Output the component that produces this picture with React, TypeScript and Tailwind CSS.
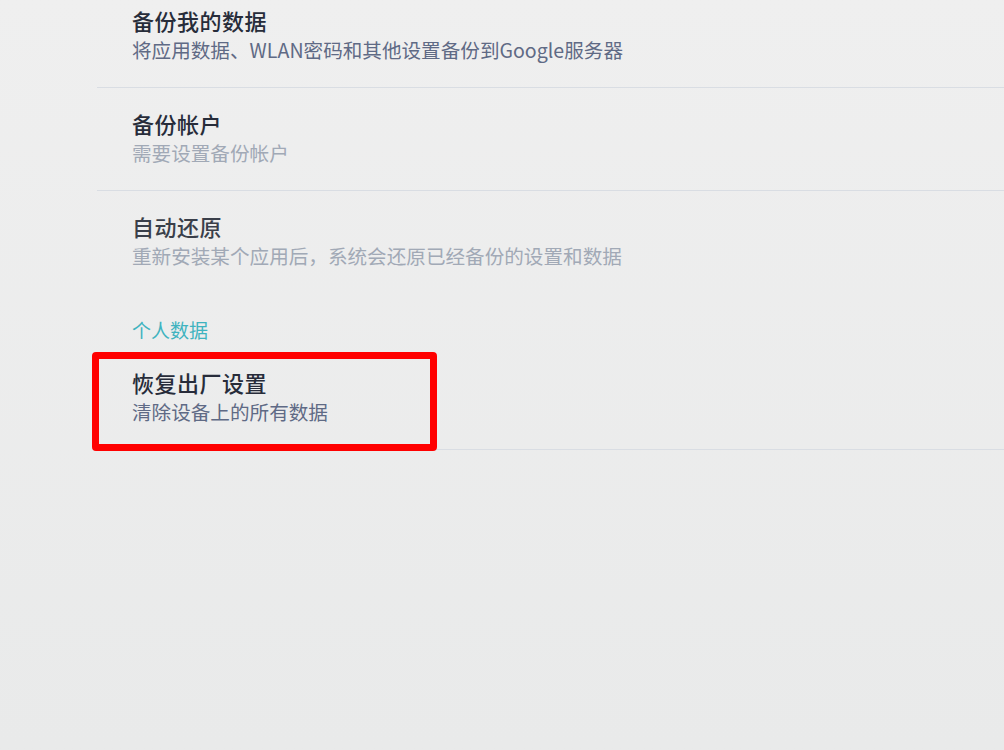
import React from "react";

type ItemProps = {
  title: string;
  subtitle: string;
  titleColor?: string;
  subColor?: string;
  first?: boolean;
  divider?: boolean;
  highlight?: boolean;
};

const SettingItem = ({
  title,
  subtitle,
  titleColor = "text-[#272c3a]",
  subColor = "text-[#5f6a85]",
  first = false,
  divider = true,
  highlight = false,
}: ItemProps) => (
  <div
    className={`relative pl-[35px] pb-[24px] ${first ? "pt-[6px]" : "pt-[21px]"} ${
      divider ? "border-b border-[#d9dde3]" : ""
    }`}
  >
    <div className={`text-[22px] font-medium leading-[28px] tracking-[0.5px] ${titleColor}`}>{title}</div>
    <div className={`mt-[3px] text-[19.6px] leading-[26px] ${subColor}`}>{subtitle}</div>
    {highlight && (
      <div className="absolute left-[-5px] top-[5px] h-[99px] w-[345px] rounded-[4px] border-[7px] border-[#ff0000]" />
    )}
  </div>
);

export default function App() {
  return (
    <div
      className="h-[750px] w-full overflow-hidden bg-gradient-to-b from-[#efefef] to-[#e9eaea] pl-[97px]"
      style={{ fontFamily: '"Noto Sans CJK SC", "Noto Sans", sans-serif' }}
    >
      <SettingItem
        first
        title="备份我的数据"
        subtitle="将应用数据、WLAN密码和其他设置备份到Google服务器"
      />
      <SettingItem
        title="备份帐户"
        subtitle="需要设置备份帐户"
        subColor="text-[#a1a9b6]"
      />
      <SettingItem
        title="自动还原"
        subtitle="重新安装某个应用后，系统会还原已经备份的设置和数据"
        titleColor="text-[#3a3f4a]"
        subColor="text-[#a1a9b6]"
        divider={false}
      />
      <div className="mt-[25px] pb-[5px] pl-[35px] text-[19px] leading-[24px] text-[#3fb3bf]">
        个人数据
      </div>
      <SettingItem
        title="恢复出厂设置"
        subtitle="清除设备上的所有数据"
        highlight
      />
    </div>
  );
}
